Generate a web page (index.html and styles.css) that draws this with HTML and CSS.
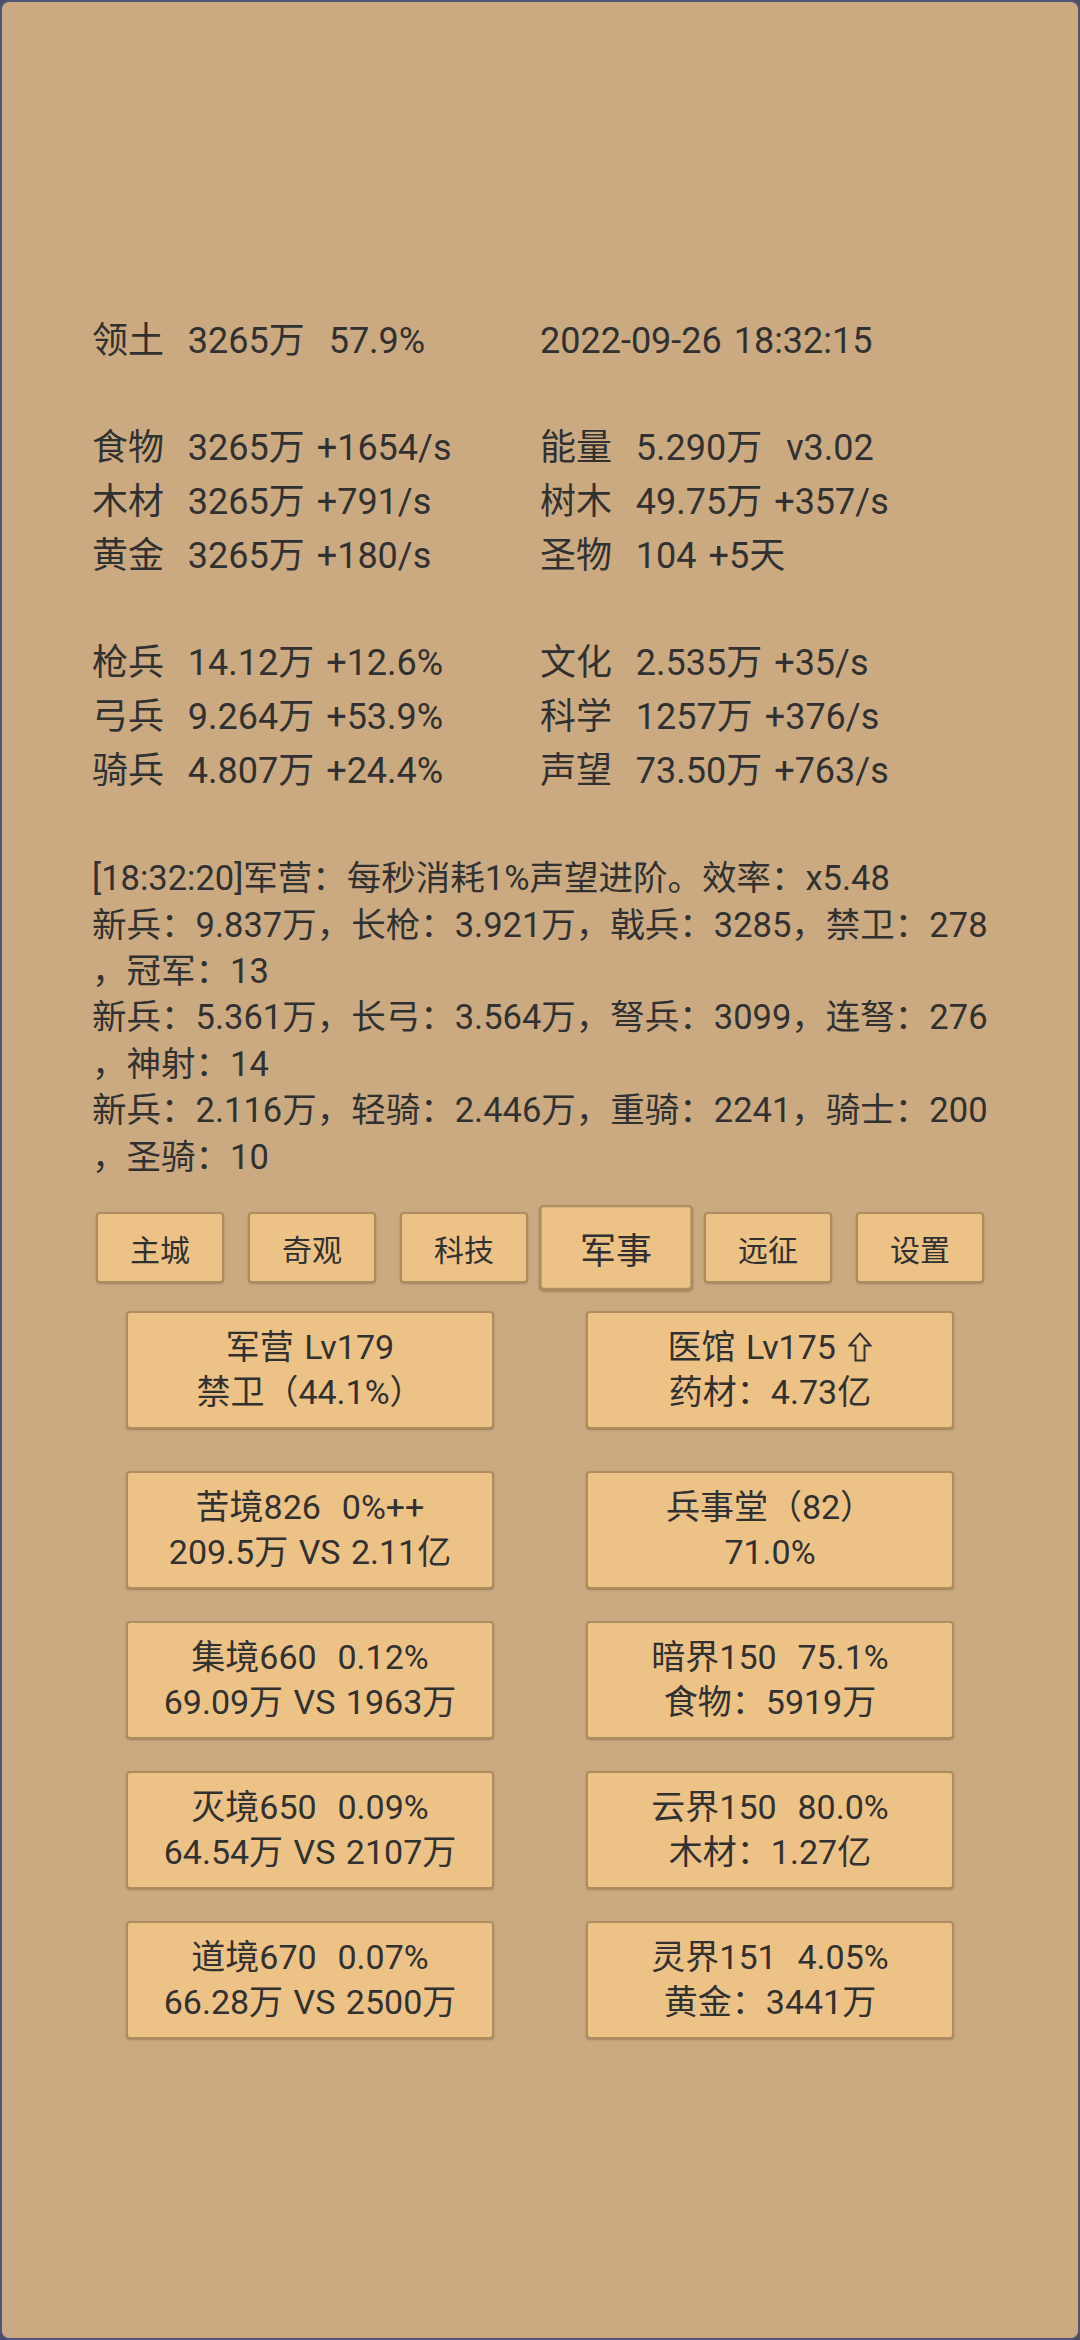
FILE: index.html
```html
<!DOCTYPE html>
<html lang="zh-CN">
<head>
<meta charset="utf-8">
<title>军事</title>
<link rel="stylesheet" href="styles.css">
</head>
<body>
<div class="screen">
  <div class="stats">
    <div class="row"><span class="c">领土  3265万  57.9%</span><span class="c">2022-09-26 18:32:15</span></div>
    <div class="row blank"></div>
    <div class="row"><span class="c">食物  3265万 +1654/s</span><span class="c">能量  5.290万  v3.02</span></div>
    <div class="row"><span class="c">木材  3265万 +791/s</span><span class="c">树木  49.75万 +357/s</span></div>
    <div class="row"><span class="c">黄金  3265万 +180/s</span><span class="c">圣物  104 +5天</span></div>
    <div class="row blank"></div>
    <div class="row"><span class="c">枪兵  14.12万 +12.6%</span><span class="c">文化  2.535万 +35/s</span></div>
    <div class="row"><span class="c">弓兵  9.264万 +53.9%</span><span class="c">科学  1257万 +376/s</span></div>
    <div class="row"><span class="c">骑兵  4.807万 +24.4%</span><span class="c">声望  73.50万 +763/s</span></div>
  </div>

  <div class="log">
    <div class="line">[18:32:20]军营：每秒消耗1%声望进阶。效率：x5.48</div>
    <div class="line">新兵：9.837万，长枪：3.921万，戟兵：3285，禁卫：278</div>
    <div class="line">，冠军：13</div>
    <div class="line">新兵：5.361万，长弓：3.564万，弩兵：3099，连弩：276</div>
    <div class="line">，神射：14</div>
    <div class="line">新兵：2.116万，轻骑：2.446万，重骑：2241，骑士：200</div>
    <div class="line">，圣骑：10</div>
  </div>

  <div class="tabs">
    <div class="tab-cell"><div class="tab">主城</div></div>
    <div class="tab-cell"><div class="tab">奇观</div></div>
    <div class="tab-cell"><div class="tab">科技</div></div>
    <div class="tab-cell"><div class="tab active">军事</div></div>
    <div class="tab-cell"><div class="tab">远征</div></div>
    <div class="tab-cell"><div class="tab">设置</div></div>
  </div>

  <div class="cards">
    <div class="card first"><div class="ln">军营 Lv179</div><div class="ln">禁卫（44.1%）</div></div>
    <div class="card first"><div class="ln">医馆 Lv175 <svg class="arrow" viewBox="0 0 24 30" width="24" height="30"><polygon points="12,1.5 22.5,13.5 16.5,13.5 16.5,28.5 7.5,28.5 7.5,13.5 1.5,13.5" fill="none" stroke="#333333" stroke-width="2" stroke-linejoin="miter"/></svg></div><div class="ln">药材：4.73亿</div></div>
    <div class="card"><div class="ln">苦境826  0%++</div><div class="ln">209.5万 VS 2.11亿</div></div>
    <div class="card"><div class="ln">兵事堂（82）</div><div class="ln">71.0%</div></div>
    <div class="card"><div class="ln">集境660  0.12%</div><div class="ln">69.09万 VS 1963万</div></div>
    <div class="card"><div class="ln">暗界150  75.1%</div><div class="ln">食物：5919万</div></div>
    <div class="card"><div class="ln">灭境650  0.09%</div><div class="ln">64.54万 VS 2107万</div></div>
    <div class="card"><div class="ln">云界150  80.0%</div><div class="ln">木材：1.27亿</div></div>
    <div class="card"><div class="ln">道境670  0.07%</div><div class="ln">66.28万 VS 2500万</div></div>
    <div class="card"><div class="ln">灵界151  4.05%</div><div class="ln">黄金：3441万</div></div>
  </div>
</div>
</body>
</html>
```

FILE: styles.css
```css
html, body {
  margin: 0;
  padding: 0;
  background: #4a4f68;
}

body {
  font-family: Roboto, "Noto Sans CJK SC", sans-serif;
  color: #313131;
}

.screen {
  width: 1080px;
  height: 2340px;
  box-sizing: border-box;
  border: 2px solid #4f5676;
  border-radius: 9px;
  background: #cbaa81;
  overflow: hidden;
}

.stats {
  margin-top: 313px;
  padding: 0 90px;
  font-size: 36px;
  word-spacing: 3px;
}

.row {
  display: grid;
  grid-template-columns: 1fr 1fr;
  height: 53.7px;
  line-height: 53.7px;
}

.c {
  white-space: pre;
}

.log {
  margin-top: 57px;
  padding: 0 90px;
  font-size: 34.5px;
  line-height: 46.4px;
}

.line {
  white-space: pre;
}

.tabs {
  margin-top: 32px;
  display: flex;
  justify-content: center;
  align-items: center;
  height: 71px;
}

.tab-cell {
  width: 152px;
  display: flex;
  justify-content: center;
}

.tab {
  width: 128px;
  height: 71px;
  box-sizing: border-box;
  display: flex;
  align-items: center;
  justify-content: center;
  background: #edc287;
  border: 2px solid #ad8d60;
  border-radius: 4px;
  box-shadow: 0 1px 2px rgba(60, 40, 10, 0.3);
  font-size: 30px;
}

.tab.active {
  transform: scale(1.2);
}

.cards {
  margin-top: 28px;
  padding: 0 78px;
  display: grid;
  grid-template-columns: 460px 460px;
  row-gap: 32px;
}

.card {
  justify-self: center;
  width: 368px;
  height: 118px;
  box-sizing: border-box;
  display: flex;
  flex-direction: column;
  align-items: center;
  justify-content: center;
  background: #edc287;
  border: 2px solid #ad8d60;
  border-radius: 4px;
  box-shadow: 0 1px 2px rgba(60, 40, 10, 0.3);
  font-size: 34px;
  line-height: 45px;
  word-spacing: 2px;
}

.card.first {
  margin-bottom: 10px;
}

.ln {
  white-space: pre;
}

.arrow {
  vertical-align: -3px;
  margin-left: 2px;
}
```
